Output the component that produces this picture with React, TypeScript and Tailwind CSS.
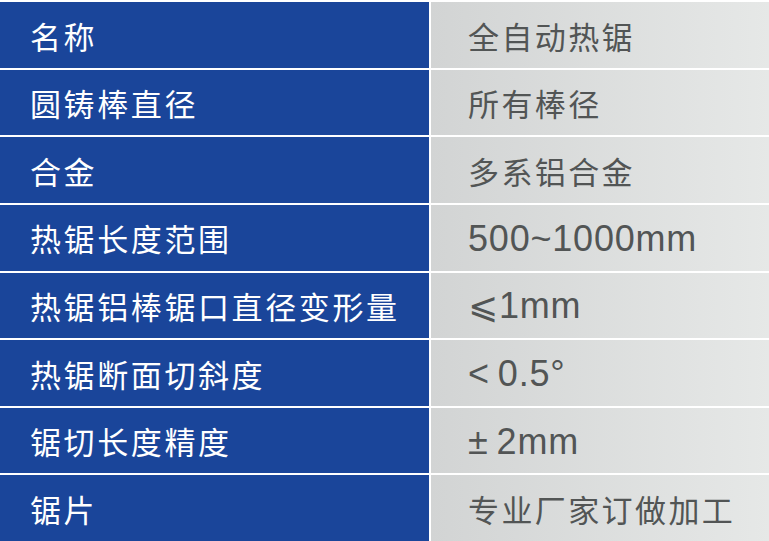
import React from "react";

const rows: { name: string; value: string; latin?: boolean }[] = [
  { name: "名称", value: "全自动热锯" },
  { name: "圆铸棒直径", value: "所有棒径" },
  { name: "合金", value: "多系铝合金" },
  { name: "热锯长度范围", value: "500~1000mm", latin: true },
  { name: "热锯铝棒锯口直径变形量", value: "⩽1mm", latin: true },
  { name: "热锯断面切斜度", value: "<\u20090.5°", latin: true },
  { name: "锯切长度精度", value: "±\u20092mm", latin: true },
  { name: "锯片", value: "专业厂家订做加工" },
];

const cjk = "font-['Noto_Sans_CJK_SC',sans-serif]";
const latin = "font-['Liberation_Sans','DejaVu_Sans','Noto_Sans_CJK_SC',sans-serif]";

export default function App() {
  return (
    <div className="w-[769px] h-[541px] bg-white pt-[2px] flex flex-col gap-[2px] overflow-hidden">
      {rows.map((row) => (
        <div key={row.name} className="flex-1 flex gap-[2px]">
          {/* label column */}
          <div
            className={`w-[429px] flex items-center pl-[30px] pt-[2px] bg-[#1a459a] text-white text-[31px] tracking-[2.6px] ${cjk}`}
          >
            {row.name}
          </div>
          {/* value column */}
          <div
            className={`flex-1 flex items-center pl-[37px] pt-[2px] bg-gradient-to-r from-[#d2d4d4] to-[#e6e8e7] text-[#525555] ${
              row.latin
                ? `text-[36px] tracking-[0.8px] ${latin}`
                : `text-[31px] tracking-[2.4px] ${cjk}`
            }`}
          >
            {row.value}
          </div>
        </div>
      ))}
    </div>
  );
}
